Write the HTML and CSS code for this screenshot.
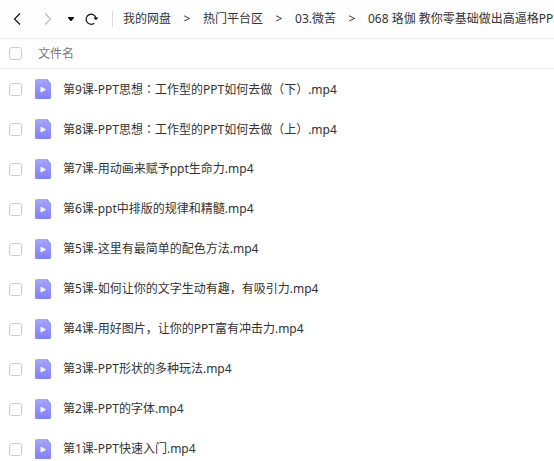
FILE: index.html
```html
<!DOCTYPE html>
<html lang="zh-CN">
<head>
    <meta charset="UTF-8">
    <meta name="viewport" content="width=device-width, initial-scale=1.0">
    <title>我的网盘</title>
    <link rel="stylesheet" href="styles.css">
</head>
<body>

    <!-- shared file icon -->
    <svg class="sprite" aria-hidden="true">
        <defs>
            <linearGradient id="video-fill" x1="0" y1="0" x2="0" y2="1">
                <stop offset="0" stop-color="#a6a6ff"/>
                <stop offset="1" stop-color="#8080fb"/>
            </linearGradient>
        </defs>
        <symbol id="video" viewBox="0 0 16 20">
            <path d="M1.5 0H12L16 4.5V18.5Q16 20 14.5 20H1.5Q0 20 0 18.5V1.5Q0 0 1.5 0Z" fill="url(#video-fill)"/>
            <path d="M12 0L16 4.5H13.2Q12 4.5 12 3.3Z" fill="#9999fa"/>
            <path d="M5.5 8.2Q5.5 7.4 6.2 7.8L10.6 10.2Q11.2 10.6 10.6 11L6.2 13.3Q5.5 13.6 5.5 12.9Z" fill="#fff"/>
        </symbol>
    </svg>

    <header class="toolbar">
        <div class="nav-buttons">
            <button class="nav-btn back" type="button" aria-label="后退">
                <svg width="8" height="12" viewBox="0 0 8 12"><path d="M7 0.5L1.5 6L7 11.5" fill="none" stroke="currentColor" stroke-width="1.2"/></svg>
            </button>
            <button class="nav-btn forward" type="button" aria-label="前进">
                <svg width="8" height="12" viewBox="0 0 8 12"><path d="M1 0.5L6.5 6L1 11.5" fill="none" stroke="currentColor" stroke-width="1.2"/></svg>
            </button>
            <button class="nav-btn history" type="button" aria-label="历史">
                <svg width="6" height="4" viewBox="0 0 6 4"><path d="M0 0H6V1L3.5 4H2.5L0 1Z" fill="currentColor"/></svg>
            </button>
            <button class="nav-btn refresh" type="button" aria-label="刷新">
                <svg width="14" height="12" viewBox="0 0 14 12"><path d="M9.2 10.2A5 5 0 1 1 11 5" fill="none" stroke="currentColor" stroke-width="1.2"/><path d="M8.4 4.4H13.4L10.9 7.2Z" fill="currentColor"/></svg>
            </button>
        </div>
        <nav class="breadcrumb">
            <a href="#">我的网盘</a>
            <span class="sep">&gt;</span>
            <a href="#">热门平台区</a>
            <span class="sep">&gt;</span>
            <a href="#">03.微苦</a>
            <span class="sep">&gt;</span>
            <a href="#">068 珞伽 教你零基础做出高逼格PP</a>
        </nav>
    </header>

    <table class="files">
        <thead>
            <tr>
                <th class="check"><input type="checkbox" aria-label="全选"></th>
                <th class="name" colspan="2">文件名</th>
            </tr>
        </thead>
        <tbody>
            <tr>
                <td class="check"><input type="checkbox" id="f1"></td>
                <td class="type"><svg class="file-icon"><use href="#video"/></svg></td>
                <td><label for="f1">第9课-PPT思想<span class="punct" lang="zh-TW">：</span>工作型的PPT如何去做（下）.mp4</label></td>
            </tr>
            <tr>
                <td class="check"><input type="checkbox" id="f2"></td>
                <td class="type"><svg class="file-icon"><use href="#video"/></svg></td>
                <td><label for="f2">第8课-PPT思想<span class="punct" lang="zh-TW">：</span>工作型的PPT如何去做（上）.mp4</label></td>
            </tr>
            <tr>
                <td class="check"><input type="checkbox" id="f3"></td>
                <td class="type"><svg class="file-icon"><use href="#video"/></svg></td>
                <td><label for="f3">第7课-用动画来赋予ppt生命力.mp4</label></td>
            </tr>
            <tr>
                <td class="check"><input type="checkbox" id="f4"></td>
                <td class="type"><svg class="file-icon"><use href="#video"/></svg></td>
                <td><label for="f4">第6课-ppt中排版的规律和精髓.mp4</label></td>
            </tr>
            <tr>
                <td class="check"><input type="checkbox" id="f5"></td>
                <td class="type"><svg class="file-icon"><use href="#video"/></svg></td>
                <td><label for="f5">第5课-这里有最简单的配色方法.mp4</label></td>
            </tr>
            <tr>
                <td class="check"><input type="checkbox" id="f6"></td>
                <td class="type"><svg class="file-icon"><use href="#video"/></svg></td>
                <td><label for="f6">第5课-如何让你的文字生动有趣，有吸引力.mp4</label></td>
            </tr>
            <tr>
                <td class="check"><input type="checkbox" id="f7"></td>
                <td class="type"><svg class="file-icon"><use href="#video"/></svg></td>
                <td><label for="f7">第4课-用好图片，让你的PPT富有冲击力.mp4</label></td>
            </tr>
            <tr>
                <td class="check"><input type="checkbox" id="f8"></td>
                <td class="type"><svg class="file-icon"><use href="#video"/></svg></td>
                <td><label for="f8">第3课-PPT形状的多种玩法.mp4</label></td>
            </tr>
            <tr>
                <td class="check"><input type="checkbox" id="f9"></td>
                <td class="type"><svg class="file-icon"><use href="#video"/></svg></td>
                <td><label for="f9">第2课-PPT的字体.mp4</label></td>
            </tr>
            <tr>
                <td class="check"><input type="checkbox" id="f10"></td>
                <td class="type"><svg class="file-icon"><use href="#video"/></svg></td>
                <td><label for="f10">第1课-PPT快速入门.mp4</label></td>
            </tr>
        </tbody>
    </table>

</body>
</html>
```
FILE: styles.css
```css
* {
    box-sizing: border-box;
}

body {
    margin: 0;
    height: 100vh;
    overflow: hidden;
    background-color: #fff;
    color: #333;
    font-family: "Noto Sans", "Noto Sans CJK SC", sans-serif;
    font-size: 12px;
    line-height: 18px;
}

.sprite {
    display: block;
    width: 0;
    height: 0;
}

.toolbar {
    display: flex;
    align-items: center;
    height: 39px;
    background-color: #fefefe;
    border-bottom: 1px solid #ebebeb;
}

.nav-buttons {
    display: flex;
    flex-shrink: 0;
    align-items: center;
    height: 16px;
    padding: 0 13px;
    border-right: 1px solid #ddd;
}

.nav-btn {
    display: flex;
    padding: 0;
    border: none;
    background: none;
    color: #111;
    cursor: pointer;
}

.forward {
    margin-left: 23px;
    color: #bbb;
}

.history {
    margin-left: 16px;
}

.refresh {
    margin-left: 11px;
}

.breadcrumb {
    display: flex;
    gap: 12px;
    padding-left: 10px;
    white-space: nowrap;
}

.breadcrumb a {
    color: #333;
    text-decoration: none;
}

.sep {
    width: 8px;
    text-align: center;
}

.files {
    width: 100%;
    border-collapse: separate;
    border-spacing: 0;
}

.files th {
    height: 30px;
    padding: 0;
    border-bottom: 1px solid #f2f2f2;
    color: #777;
    font-weight: normal;
    text-align: left;
}

.files td {
    height: 40px;
    padding: 0;
    white-space: nowrap;
}

.files .check {
    width: 35px;
    padding-left: 9px;
}

.files .name {
    padding-left: 3px;
}

.files .type {
    width: 28px;
}

.files input {
    appearance: none;
    display: block;
    width: 13px;
    height: 13px;
    margin: 0;
    border: 1px solid #ccc;
    border-radius: 3px;
    background-color: #fff;
}

.file-icon {
    display: block;
    width: 16px;
    height: 20px;
}

/* centred full-width colon */
.punct {
    font-family: "Noto Sans CJK TC", sans-serif;
}
```
